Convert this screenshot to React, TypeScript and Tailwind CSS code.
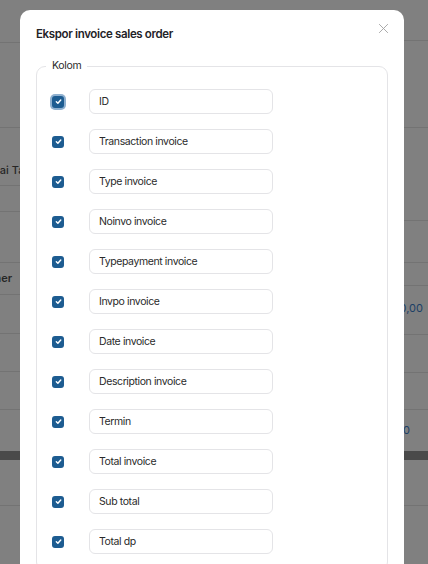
import React from 'react';

const columns = [
  'ID',
  'Transaction invoice',
  'Type invoice',
  'Noinvo invoice',
  'Typepayment invoice',
  'Invpo invoice',
  'Date invoice',
  'Description invoice',
  'Termin',
  'Total invoice',
  'Sub total',
  'Total dp',
];

function CheckBox({ focused }: { focused?: boolean }) {
  return (
    <span
      className={
        'flex h-[12px] w-[12px] shrink-0 items-center justify-center rounded-[3px] bg-[#1d5c91] ' +
        (focused ? 'ring-2 ring-[#8fb0cf]' : '')
      }
    >
      <svg width="9" height="9" viewBox="0 0 10 10" fill="none">
        <path d="M2.6 5.3 L4.3 6.9 L7.5 3.3" stroke="#ffffff" strokeWidth="1.6" strokeLinecap="round" strokeLinejoin="round" />
      </svg>
    </span>
  );
}

export default function App() {
  return (
    <div className="relative h-[564px] w-[428px] overflow-hidden bg-[#808080] font-['Inter',sans-serif]">
      {/* dimmed page behind the dialog */}
      <div className="flex h-full">
        <div className="flex w-1/2 flex-col">
          <div className="h-[43px] shrink-0 border-b border-[#737373]" />
          <div className="h-[85px] shrink-0 border-b border-[#737373]" />
          <div className="flex h-[58px] shrink-0 items-end border-b border-[#737373] pb-[7px]">
            <span className="ml-[-14px] whitespace-nowrap text-[11px] font-medium text-[#262626]">Nilai Tagihan</span>
          </div>
          <div className="h-[26px] shrink-0 border-b border-[#737373]" />
          <div className="h-[51px] shrink-0 border-b border-[#737373]" />
          <div className="flex h-[32px] shrink-0 items-center border-b border-[#737373]">
            <span className="ml-[-40px] whitespace-nowrap text-[11px] font-semibold text-[#262626]">Customer</span>
          </div>
          <div className="h-[39px] shrink-0 border-b border-[#737373]" />
          <div className="h-[38px] shrink-0 border-b border-[#737373]" />
          <div className="h-[38px] shrink-0 border-b border-[#737373]" />
          <div className="h-[41px] shrink-0" />
          <div className="h-[9px] shrink-0 bg-[#4a4a4a]" />
          <div className="h-[46px] shrink-0 border-b border-[#737373]" />
        </div>
        <div className="flex w-1/2 flex-col">
          <div className="h-[41px] shrink-0 border-b border-[#737373]" />
          <div className="h-[87px] shrink-0 border-b border-[#737373]" />
          <div className="h-[93px] shrink-0 border-b border-[#737373]" />
          <div className="h-[42px] shrink-0 border-b border-[#737373]" />
          <div className="h-[23px] shrink-0 border-b border-[#737373]" />
          <div className="flex h-[49px] shrink-0 items-center justify-end border-b border-[#737373] pb-[3px] pl-[5px] pr-[5px]">
            <span className="whitespace-nowrap text-[11px] text-[#1c3f66]">1.250.000,00</span>
          </div>
          <div className="h-[38px] shrink-0 border-b border-[#737373]" />
          <div className="h-[37px] shrink-0 border-b border-[#737373]" />
          <div className="flex h-[41px] shrink-0 items-center justify-end pr-[18px]">
            <span className="whitespace-nowrap text-[11px] text-[#1c3f66]">0</span>
          </div>
          <div className="h-[9px] shrink-0 bg-[#4a4a4a]" />
          <div className="h-[46px] shrink-0 border-b border-[#737373]" />
        </div>
      </div>

      {/* dialog */}
      <div className="absolute left-[20px] top-[10px] h-[620px] w-[384px] rounded-[10px] bg-white px-4 pt-[16px]">
        <div className="flex items-start justify-between">
          <h2 className="text-[11.5px] font-semibold leading-[16px] tracking-[-0.35px] text-[#1f2328]">
            Ekspor invoice sales order
          </h2>
          <button className="mr-[-1px] mt-[-3px] text-[#a3a3a3]">
            <svg width="11" height="11" viewBox="0 0 12 12" fill="none">
              <path d="M1.5 1.5 L10.5 10.5 M10.5 1.5 L1.5 10.5" stroke="currentColor" strokeWidth="1" strokeLinecap="round" />
            </svg>
          </button>
        </div>

        <fieldset className="mt-[17px] rounded-[9px] border border-[#e4e4e7] pb-4 pl-[15px] pr-4 pt-[16px]">
          <legend className="ml-[-6px] px-[6px] text-[10.5px] leading-[14px] tracking-[-0.3px] text-[#2b2b2b]">Kolom</legend>
          <div className="flex flex-col gap-[15px]">
            {columns.map((name, i) => (
              <label key={name} className="flex items-center gap-[25px]">
                <CheckBox focused={i === 0} />
                <span className="flex h-[25px] w-[184px] items-center rounded-[6px] border border-[#e4e4e7] px-[9px] text-[10.5px] tracking-[-0.4px] text-[#2a2a2a]">
                  {name}
                </span>
              </label>
            ))}
          </div>
        </fieldset>
      </div>
    </div>
  );
}
